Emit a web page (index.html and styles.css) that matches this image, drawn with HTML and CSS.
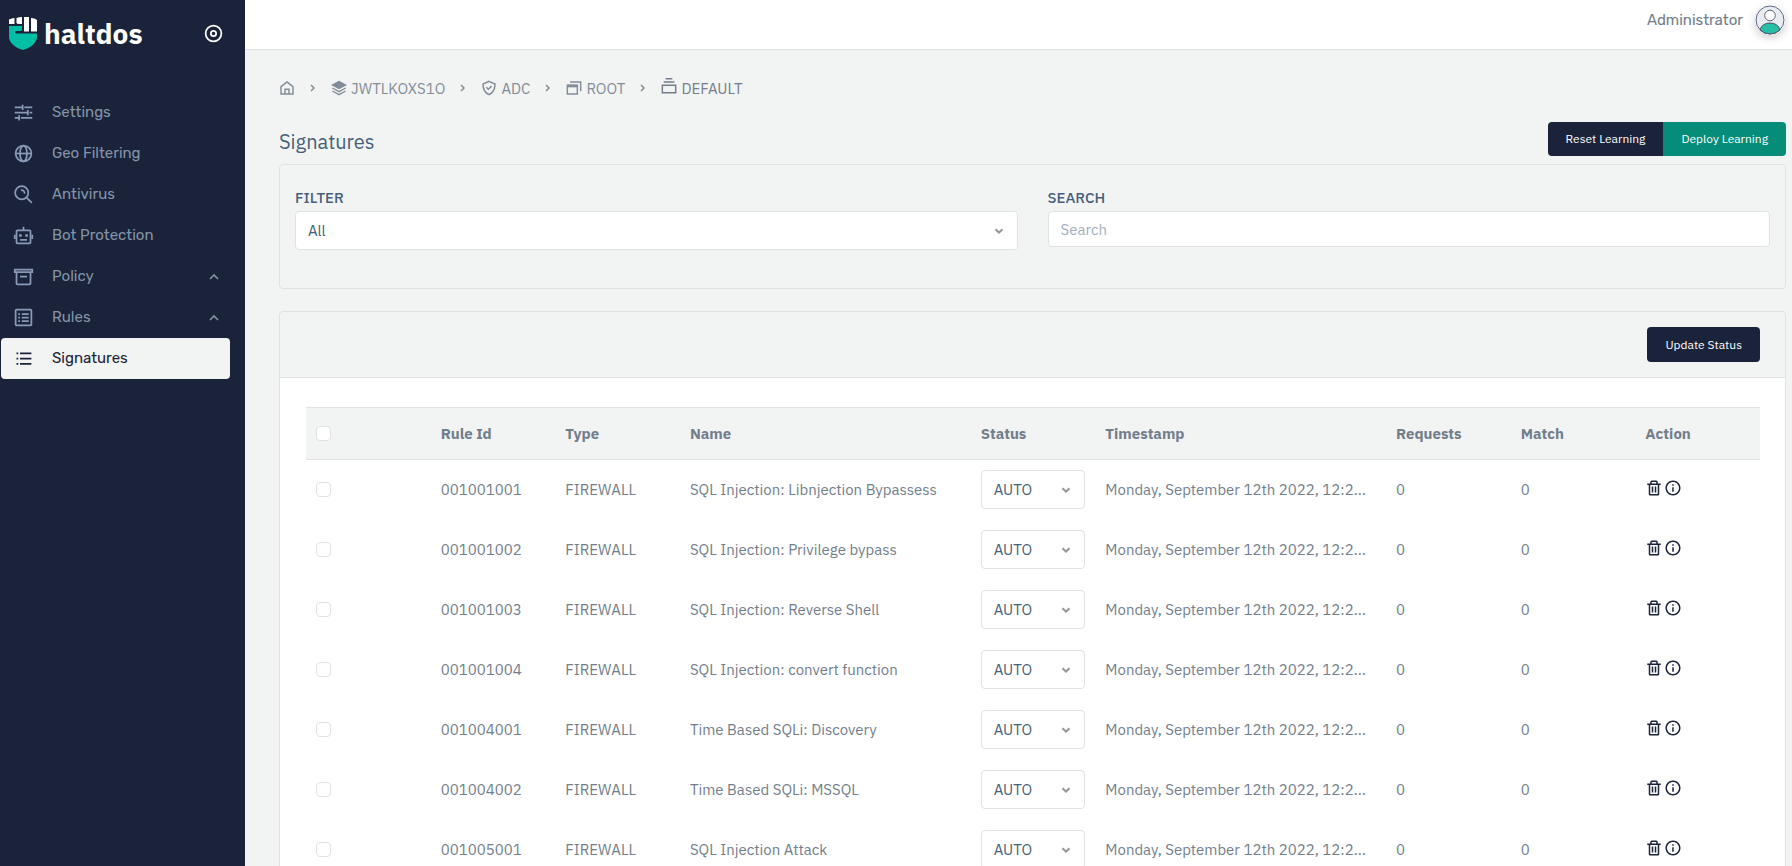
FILE: index.html
```
<!DOCTYPE html>
<html lang="en">
<head>
  <meta charset="UTF-8">
  <title>Haltdos - Signatures</title>
  <link rel="stylesheet" href="styles.css">
</head>
<body>
  <!-- icon set -->
  <svg class="sprite" aria-hidden="true">
    <symbol id="trash" viewBox="0 0 24 24"><path d="M5 20a2 2 0 0 0 2 2h10a2 2 0 0 0 2-2V8h2V6h-4V4a2 2 0 0 0-2-2H9a2 2 0 0 0-2 2v2H3v2h2zM9 4h6v2H9zM7 8h10v12H7V8z"/><path d="M9 10h2v8H9zm4 0h2v8h-2z"/></symbol>
    <symbol id="info" viewBox="0 0 24 24"><path d="M12 2C6.486 2 2 6.486 2 12s4.486 10 10 10 10-4.486 10-10S17.514 2 12 2zm0 18c-4.411 0-8-3.589-8-8s3.589-8 8-8 8 3.589 8 8-3.589 8-8 8z"/><path d="M11 11h2v6h-2zm0-4h2v2h-2z"/></symbol>
    <symbol id="chevron-up" viewBox="0 0 24 24"><path d="M6 15l6-6 6 6" fill="none" stroke="currentColor" stroke-width="2.4"/></symbol>
    <symbol id="chevron-right" viewBox="0 0 24 24"><path d="M8 6l6 6-6 6" fill="none" stroke="currentColor" stroke-width="3"/></symbol>
  </svg>

  <div class="layout">
    <aside class="sidebar">
      <div class="brand">
        <a href="#" class="logo">
          <svg class="logo-mark" viewBox="0 0 28 33">
            <path fill="#00bfa5" d="M0 9h13v3q0 2-2 2H8q-2 0-2 1.200T8 16.500h20v3c0 6-5.500 11-14 13.500C5.500 30.500 0 25.500 0 19.500z"/>
            <g fill="#fff">
              <path d="M0 2.500Q2.500 1 5.500 1v6H0z"/>
              <path d="M7.500 1Q10 0 13 0v7h-3q-2.500 0-2.500-1z"/>
              <path d="M15 0h5v14.500h-5z"/>
              <path d="M22 1q4 0 6 2v11.500h-6z"/>
            </g>
          </svg>
          <span class="logo-text">haltdos</span>
        </a>
        <button type="button" class="pin" aria-label="Toggle menu">
          <svg class="icon-pin" viewBox="0 0 24 24" fill="none" stroke="currentColor" stroke-width="2"><circle cx="12" cy="12" r="9"/><circle cx="12" cy="12" r="3"/></svg>
        </button>
      </div>
      <nav class="menu">
        <a href="#" class="menu-item">
          <svg class="icon" viewBox="0 0 24 24" fill="none" stroke="currentColor" stroke-width="2"><path d="M2 6h8M13 6h9M2 12h14M19 12h3M2 18h4M9 18h13M11 3v6M17 9v6M7 15v6"/></svg>
          <span>Settings</span>
        </a>
        <a href="#" class="menu-item">
          <svg class="icon" viewBox="0 0 24 24" fill="none" stroke="currentColor" stroke-width="2"><circle cx="12" cy="12" r="9"/><ellipse cx="12" cy="12" rx="4" ry="9"/><path d="M3 12h18"/></svg>
          <span>Geo Filtering</span>
        </a>
        <a href="#" class="menu-item">
          <svg class="icon" viewBox="0 0 24 24" fill="none" stroke="currentColor" stroke-width="2"><circle cx="10" cy="10" r="7.500"/><path d="M15.500 15.500l6 6M9 7q4-.5 4.500 4"/></svg>
          <span>Antivirus</span>
        </a>
        <a href="#" class="menu-item">
          <svg class="icon" viewBox="0 0 24 24" fill="none" stroke="currentColor" stroke-width="2"><rect x="4" y="6" width="16" height="15" rx="1"/><path d="M12 2v4M2 11v5M22 11v5M8 17h8"/><path stroke-width="3" d="M7 12h3M14 12h3"/></svg>
          <span>Bot Protection</span>
        </a>
        <a href="#" class="menu-item">
          <svg class="icon" viewBox="0 0 24 24" fill="none" stroke="currentColor" stroke-width="2"><path d="M2 4h20v3H2zM4 8v12q0 1 1 1h14q1 0 1-1V8M8 12h8"/></svg>
          <span>Policy</span>
          <svg class="caret"><use href="#chevron-up"/></svg>
        </a>
        <a href="#" class="menu-item">
          <svg class="icon" viewBox="0 0 24 24" fill="none" stroke="currentColor" stroke-width="2"><rect x="3" y="3" width="18" height="18" rx="1"/><path d="M6 8h2M10 8h8M6 12h2M10 12h8M6 16h2M10 16h8"/></svg>
          <span>Rules</span>
          <svg class="caret"><use href="#chevron-up"/></svg>
        </a>
        <a href="#" class="menu-item active">
          <svg class="icon" viewBox="0 0 24 24" fill="currentColor"><path d="M4 5h2v2H4zM4 11h2v2H4zM4 17h2v2H4zM8 5h13v2H8zM8 11h13v2H8zM8 17h13v2H8z"/></svg>
          <span>Signatures</span>
        </a>
      </nav>
    </aside>

    <div class="page">
      <header class="topbar">
        <span class="user-name">Administrator</span>
        <svg class="avatar" viewBox="0 0 30 30">
          <circle cx="15" cy="15" r="14" fill="#e9ecf0"/>
          <path d="M5 25q2-7 10-7t10 7q-4 4-10 4T5 25z" fill="#26bfa6" stroke="#475068"/>
          <circle cx="15" cy="10.500" r="5.300" fill="#fff" stroke="#5c6580"/>
          <circle cx="15" cy="15" r="14" fill="none" stroke="#5c6580"/>
        </svg>
      </header>

      <main class="content">
        <nav class="breadcrumb" aria-label="Breadcrumb">
          <a href="#" aria-label="Home"><svg class="crumb-icon" viewBox="0 0 24 24" fill="none" stroke="currentColor" stroke-width="2.200"><path d="M3 10l9-7 9 7v11H3zM9 21v-7h6v7"/></svg></a>
          <svg class="sep"><use href="#chevron-right"/></svg>
          <a href="#"><svg class="crumb-icon" viewBox="0 0 24 24" fill="currentColor"><path d="M12 1L0 7.500 12 14l12-6.500z"/><path d="M2 12l10 5.500L22 12M2 16.500L12 22l10-5.500" fill="none" stroke="currentColor" stroke-width="2"/></svg>JWTLKOXS1O</a>
          <svg class="sep"><use href="#chevron-right"/></svg>
          <a href="#"><svg class="crumb-icon" viewBox="0 0 24 24" fill="none" stroke="currentColor" stroke-width="2.200"><path d="M12 2l9 4c0 8-2 13-9 16C5 19 3 14 3 6zM8 11l3 3 5-5"/></svg>ADC</a>
          <svg class="sep"><use href="#chevron-right"/></svg>
          <a href="#"><svg class="crumb-icon" viewBox="0 0 24 24" fill="none" stroke="currentColor" stroke-width="2.200"><path d="M2 8h15v13H2zM6 3h16v14"/><path d="M2 9h15" stroke-width="4"/></svg>ROOT</a>
          <svg class="sep"><use href="#chevron-right"/></svg>
          <span class="current"><svg class="crumb-icon raised" viewBox="0 0 24 24" fill="none" stroke="currentColor" stroke-width="2.200"><path d="M2 11h20v11H2zM4 6h16M7 1h10"/></svg>DEFAULT</span>
        </nav>

        <div class="title-row">
          <h1>Signatures</h1>
          <div class="btn-group">
            <button type="button" class="btn">Reset Learning</button>
            <button type="button" class="btn btn-success">Deploy Learning</button>
          </div>
        </div>

        <section class="card filters">
          <div class="field">
            <label for="filter">FILTER</label>
            <select id="filter" class="select"><option>All</option></select>
          </div>
          <div class="field">
            <label for="search">SEARCH</label>
            <input type="text" id="search" class="search" placeholder="Search">
          </div>
        </section>

        <section class="card">
          <div class="card-header">
            <button type="button" class="btn">Update Status</button>
          </div>
          <div class="card-body">
            <table class="signatures">
              <thead>
                <tr>
                  <th><input type="checkbox" aria-label="Select all"></th>
                  <th>Rule Id</th>
                  <th>Type</th>
                  <th class="wide">Name</th>
                  <th>Status</th>
                  <th class="wide">Timestamp</th>
                  <th>Requests</th>
                  <th>Match</th>
                  <th>Action</th>
                </tr>
              </thead>
              <tbody>
                <tr>
                  <td><input type="checkbox" aria-label="Select 001001001"></td>
                  <td>001001001</td>
                  <td>FIREWALL</td>
                  <td>SQL Injection: Libnjection Bypassess</td>
                  <td><select class="select" aria-label="Status"><option>AUTO</option></select></td>
                  <td>Monday, September 12th 2022, 12:2...</td>
                  <td>0</td>
                  <td>0</td>
                  <td><div class="actions"><button type="button" aria-label="Delete"><svg><use href="#trash"/></svg></button><button type="button" aria-label="Info"><svg><use href="#info"/></svg></button></div></td>
                </tr>
                <tr>
                  <td><input type="checkbox" aria-label="Select 001001002"></td>
                  <td>001001002</td>
                  <td>FIREWALL</td>
                  <td>SQL Injection: Privilege bypass</td>
                  <td><select class="select" aria-label="Status"><option>AUTO</option></select></td>
                  <td>Monday, September 12th 2022, 12:2...</td>
                  <td>0</td>
                  <td>0</td>
                  <td><div class="actions"><button type="button" aria-label="Delete"><svg><use href="#trash"/></svg></button><button type="button" aria-label="Info"><svg><use href="#info"/></svg></button></div></td>
                </tr>
                <tr>
                  <td><input type="checkbox" aria-label="Select 001001003"></td>
                  <td>001001003</td>
                  <td>FIREWALL</td>
                  <td>SQL Injection: Reverse Shell</td>
                  <td><select class="select" aria-label="Status"><option>AUTO</option></select></td>
                  <td>Monday, September 12th 2022, 12:2...</td>
                  <td>0</td>
                  <td>0</td>
                  <td><div class="actions"><button type="button" aria-label="Delete"><svg><use href="#trash"/></svg></button><button type="button" aria-label="Info"><svg><use href="#info"/></svg></button></div></td>
                </tr>
                <tr>
                  <td><input type="checkbox" aria-label="Select 001001004"></td>
                  <td>001001004</td>
                  <td>FIREWALL</td>
                  <td>SQL Injection: convert function</td>
                  <td><select class="select" aria-label="Status"><option>AUTO</option></select></td>
                  <td>Monday, September 12th 2022, 12:2...</td>
                  <td>0</td>
                  <td>0</td>
                  <td><div class="actions"><button type="button" aria-label="Delete"><svg><use href="#trash"/></svg></button><button type="button" aria-label="Info"><svg><use href="#info"/></svg></button></div></td>
                </tr>
                <tr>
                  <td><input type="checkbox" aria-label="Select 001004001"></td>
                  <td>001004001</td>
                  <td>FIREWALL</td>
                  <td>Time Based SQLi: Discovery</td>
                  <td><select class="select" aria-label="Status"><option>AUTO</option></select></td>
                  <td>Monday, September 12th 2022, 12:2...</td>
                  <td>0</td>
                  <td>0</td>
                  <td><div class="actions"><button type="button" aria-label="Delete"><svg><use href="#trash"/></svg></button><button type="button" aria-label="Info"><svg><use href="#info"/></svg></button></div></td>
                </tr>
                <tr>
                  <td><input type="checkbox" aria-label="Select 001004002"></td>
                  <td>001004002</td>
                  <td>FIREWALL</td>
                  <td>Time Based SQLi: MSSQL</td>
                  <td><select class="select" aria-label="Status"><option>AUTO</option></select></td>
                  <td>Monday, September 12th 2022, 12:2...</td>
                  <td>0</td>
                  <td>0</td>
                  <td><div class="actions"><button type="button" aria-label="Delete"><svg><use href="#trash"/></svg></button><button type="button" aria-label="Info"><svg><use href="#info"/></svg></button></div></td>
                </tr>
                <tr>
                  <td><input type="checkbox" aria-label="Select 001005001"></td>
                  <td>001005001</td>
                  <td>FIREWALL</td>
                  <td>SQL Injection Attack</td>
                  <td><select class="select" aria-label="Status"><option>AUTO</option></select></td>
                  <td>Monday, September 12th 2022, 12:2...</td>
                  <td>0</td>
                  <td>0</td>
                  <td><div class="actions"><button type="button" aria-label="Delete"><svg><use href="#trash"/></svg></button><button type="button" aria-label="Info"><svg><use href="#info"/></svg></button></div></td>
                </tr>
              </tbody>
            </table>
          </div>
        </section>
      </main>
    </div>
  </div>
</body>
</html>
```

FILE: styles.css
```
* {
  box-sizing: border-box;
}

body {
  margin: 0;
  background-color: #f2f4f4;
  color: #727e8c;
  font-family: "IBM Plex Sans", Roboto, sans-serif;
  font-size: 15px;
}

a {
  color: inherit;
  text-decoration: none;
}

button, select, input {
  font-family: inherit;
}

.sprite {
  display: none;
}

.layout {
  display: flex;
  height: 100vh;
}

/* sidebar */
.sidebar {
  flex: 0 0 245px;
  background-color: #1a233a;
}

.brand {
  display: flex;
  justify-content: space-between;
  align-items: center;
  height: 92px;
  padding: 0 21px 25px 9px;
}

.logo {
  display: flex;
  align-items: center;
  gap: 7px;
}

.logo-mark {
  width: 28px;
  height: 33px;
}

.logo-text {
  color: white;
  font-size: 28px;
  font-weight: 700;
}

.pin {
  display: flex;
  padding: 0;
  border: none;
  background: none;
  color: white;
  cursor: pointer;
}

.icon-pin {
  width: 21px;
  height: 21px;
}

.menu {
  padding: 0 15px 0 1px;
}

.menu-item {
  display: flex;
  align-items: center;
  height: 41px;
  padding: 0 8px 0 12px;
  border-radius: 4px;
  color: #8494a7;
  font-family: Rubik, Roboto, sans-serif;
}

.menu-item span {
  padding-bottom: 2px;
}

.menu-item.active {
  background-color: #f2f4f4;
  color: #1a233a;
}

.icon {
  width: 21px;
  height: 21px;
  margin-right: 18px;
  color: #8a99b5;
}

.active .icon {
  color: #1a233a;
}

.caret {
  width: 16px;
  height: 16px;
  margin-left: auto;
}

/* page */
.page {
  flex: 1;
  min-width: 0;
  display: flex;
  flex-direction: column;
}

.topbar {
  display: flex;
  justify-content: flex-end;
  align-items: center;
  gap: 12px;
  height: 50px;
  padding: 0 7px 10px;
  background-color: white;
  border-bottom: 1px solid #dfe3e7;
}

.user-name {
  font-family: Rubik, Roboto, sans-serif;
}

.avatar {
  width: 30px;
  height: 30px;
  border-radius: 50%;
  box-shadow: 0 3px 8px rgba(0, 0, 0, 0.2);
}

.content {
  flex: 1;
  min-height: 0;
  padding: 28px 6px 24px 34px;
  overflow-y: auto;
  scrollbar-width: none;
}

.breadcrumb {
  display: flex;
  align-items: center;
  gap: 12px;
  height: 20px;
  color: #828d99;
}

.breadcrumb a, .breadcrumb .current {
  display: flex;
  align-items: center;
  gap: 4px;
}

.breadcrumb .current {
  color: #727e8c;
}

.crumb-icon {
  width: 16px;
  height: 16px;
}

.crumb-icon.raised {
  margin-bottom: 4px;
}

.sep {
  width: 12px;
  height: 12px;
}

.title-row {
  display: flex;
  justify-content: space-between;
  align-items: center;
  height: 34px;
  margin: 24px 0 8px;
}

h1 {
  margin: 0;
  padding-top: 4px;
  color: #475f7b;
  font-size: 20px;
  font-weight: 400;
}

.btn-group {
  display: flex;
}

.btn {
  height: 35px;
  padding: 0 18px 1px;
  border: none;
  border-radius: 4px;
  background-color: #1a233a;
  color: white;
  font-size: 12px;
  cursor: pointer;
}

.btn-success {
  background-color: #058d7a;
}

.btn-group .btn {
  height: 34px;
}

.btn-group .btn:first-child {
  border-radius: 4px 0 0 4px;
}

.btn-group .btn:last-child {
  border-radius: 0 4px 4px 0;
}

.card {
  margin-bottom: 22px;
  border: 1px solid #dfe3e7;
  border-radius: 4px;
}

.filters {
  display: grid;
  grid-template-columns: 1fr 1fr;
  gap: 30px;
  align-items: start;
  padding: 24px 15px 38px;
}

.field {
  display: flex;
  flex-direction: column;
  gap: 4px;
}

.field label {
  color: #475f7b;
  font-weight: 500;
  line-height: 18px;
}

.select, .search {
  width: 100%;
  padding: 0 12px;
  border: 1px solid #dfe3e7;
  border-radius: 4px;
  background-color: white;
  color: #475f7b;
  font-size: 15px;
}

.select {
  height: 39px;
  appearance: none;
  background-image: url("data:image/svg+xml,%3Csvg xmlns='http://www.w3.org/2000/svg' viewBox='0 0 10 10'%3E%3Cpath d='M1.500 3.200L5 6.700l3.500-3.500' fill='none' stroke='%23959595' stroke-width='2'/%3E%3C/svg%3E");
  background-repeat: no-repeat;
  background-position: right 13px center;
  background-size: 10px 10px;
}

.search {
  height: 36px;
}

.search::placeholder {
  color: #a3afbd;
}

.card-header {
  display: flex;
  justify-content: flex-end;
  padding: 15px 25px;
  border-bottom: 1px solid #dfe3e7;
}

.card-body {
  padding: 29px 25px 24px 26px;
  background-color: white;
}

/* table */
.signatures {
  width: 100%;
  table-layout: fixed;
  border-collapse: collapse;
}

.signatures th, .signatures td {
  padding: 0 10px;
  text-align: left;
  white-space: nowrap;
}

.signatures th {
  height: 52px;
  background-color: #f2f4f4;
  border-top: 1px solid #dfe3e7;
  border-bottom: 1px solid #dfe3e7;
  font-weight: 700;
}

.signatures td {
  height: 60px;
}

.signatures .wide {
  width: 20%;
}

.signatures input {
  display: block;
  width: 15px;
  height: 15px;
  margin: 0;
  appearance: none;
  background-color: white;
  border: 1px solid #dfe3e7;
  border-radius: 4px;
}

.actions {
  display: flex;
  gap: 1px;
  padding-bottom: 4px;
}

.actions button {
  padding: 0;
  border: none;
  background: none;
  color: #1a233a;
  cursor: pointer;
}

.actions svg {
  display: block;
  width: 18px;
  height: 18px;
  fill: currentColor;
}
```
